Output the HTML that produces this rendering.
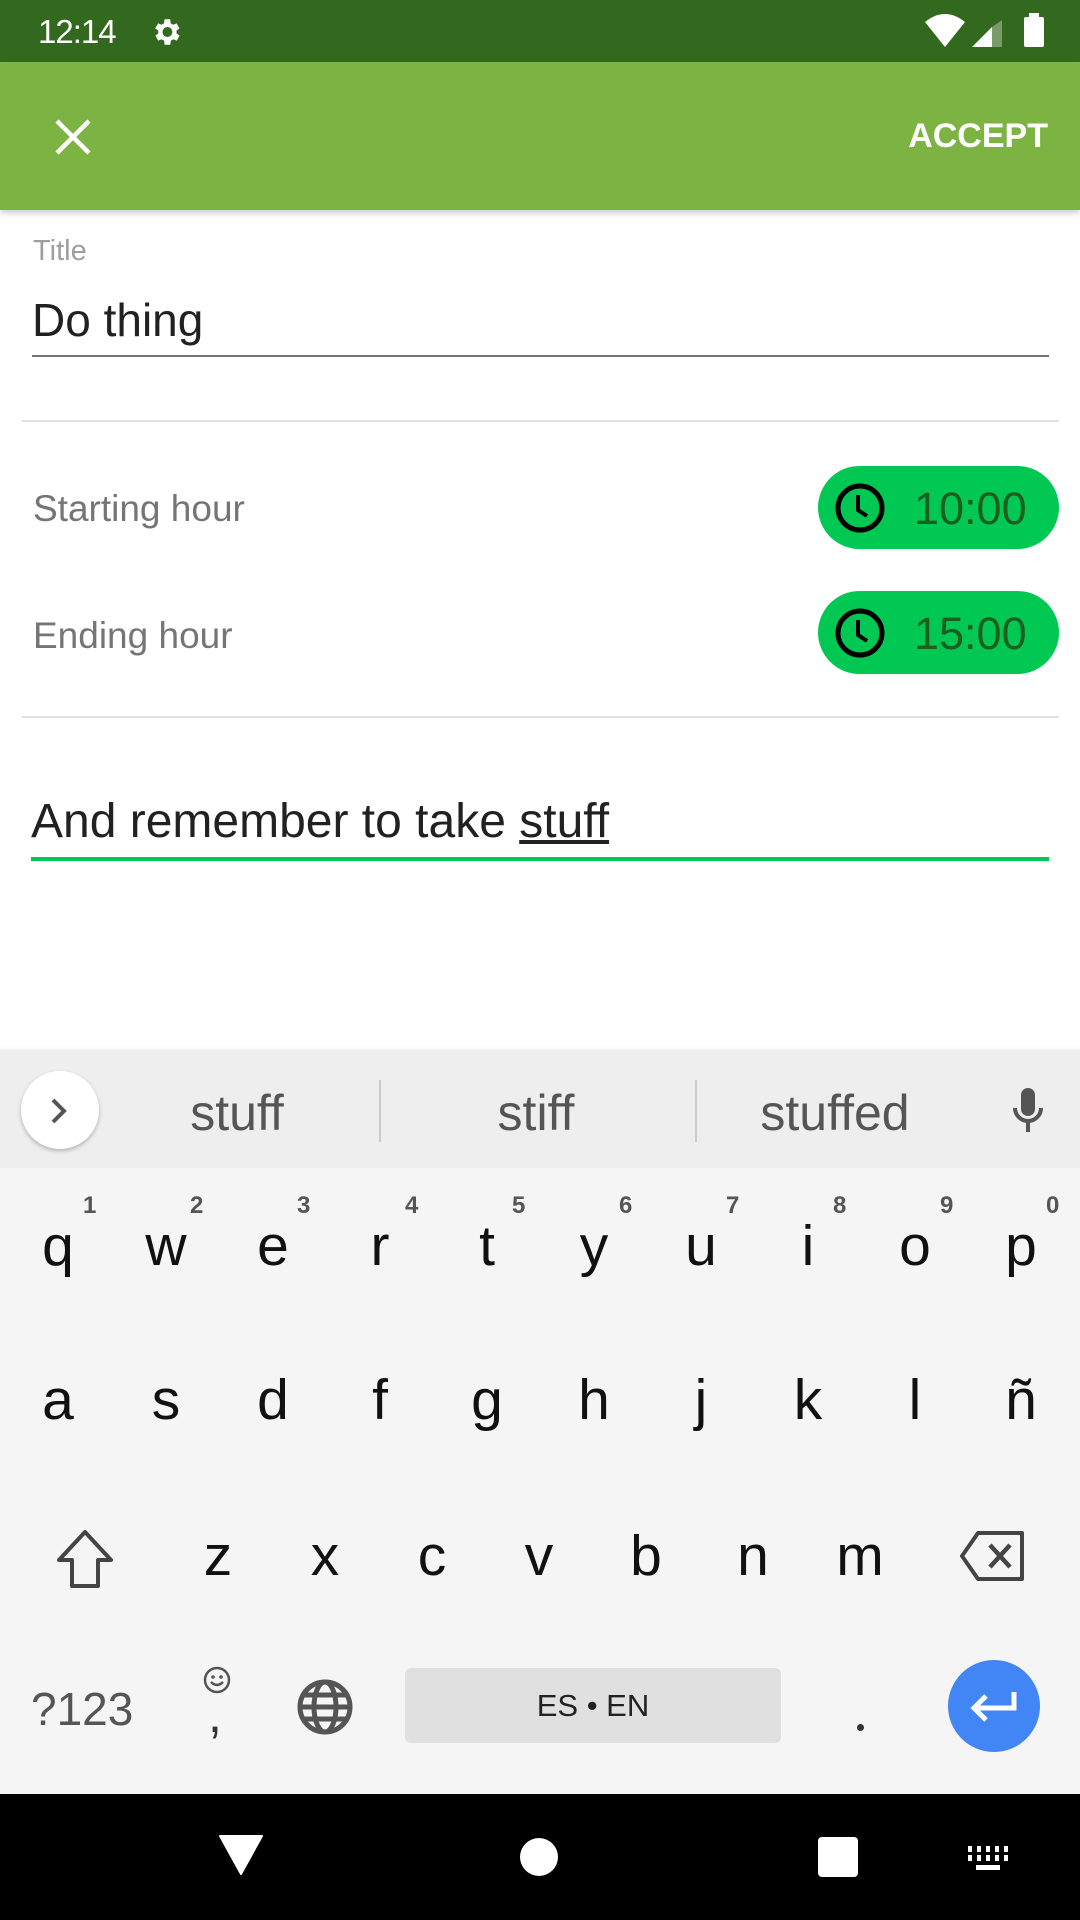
<!DOCTYPE html>
<html><head><meta charset="utf-8"><style>
*{margin:0;padding:0;box-sizing:border-box}
body{width:1080px;height:1920px;position:relative;overflow:hidden;background:#fff;font-family:"Liberation Sans",sans-serif}
.a{position:absolute}
.t{position:absolute;white-space:nowrap;line-height:1}
.k{position:absolute;width:108px;text-align:center;font-size:57px;color:#111;line-height:1}
.n{position:absolute;font-size:24px;color:#555;line-height:1;font-weight:bold}
</style></head><body>
<div class="a" style="left:0;top:0;width:1080px;height:62px;background:#33691e"></div>
<div class="t" style="left:38px;top:15px;font-size:33px;color:#fff;font-weight:500;letter-spacing:-1px">12:14</div>
<svg class="a" style="left:149px;top:15px" width="34" height="34" viewBox="0 0 24 24"><path fill="#fff" d="M19.4 13a7.5 7.5 0 000-2l2.1-1.6-2-3.5-2.5 1a7 7 0 00-1.7-1L15 3h-4l-.4 2.9a7 7 0 00-1.7 1l-2.5-1-2 3.5L6.6 11a7.5 7.5 0 000 2l-2.1 1.6 2 3.5 2.5-1a7 7 0 001.7 1L11 21h4l.4-2.9a7 7 0 001.7-1l2.5 1 2-3.5zM13 15.5A3.5 3.5 0 1113 8.5a3.5 3.5 0 010 7z"/></svg>
<svg class="a" style="left:925px;top:12px" width="40" height="36" viewBox="0 0 40 36"><path fill="#fff" d="M0 10Q20-6 40 10L20 35Z"/></svg>
<svg class="a" style="left:972px;top:20px" width="32" height="28" viewBox="0 0 32 28"><path fill="#fff" d="M0 27L20 7V27Z"/><path fill="#7a9a6a" d="M20 7L30 0V27H20Z"/></svg>
<div class="a" style="left:1024px;top:17px;width:20px;height:30px;background:#fff;border-radius:2px"></div>
<div class="a" style="left:1029px;top:13px;width:10px;height:5px;background:#fff"></div>
<div class="a" style="left:0;top:62px;width:1080px;height:148px;background:#7cb342;box-shadow:0 3px 6px rgba(0,0,0,.2)"></div>
<svg class="a" style="left:54px;top:118px" width="38" height="38" viewBox="0 0 38 38"><path stroke="#fff" stroke-width="4.5" d="M3 3L35 35M35 3L3 35"/></svg>
<div class="t" style="right:32px;top:119px;font-size:34px;color:#fff;font-weight:bold">ACCEPT</div>
<div class="t" style="left:33px;top:237px;font-size:29px;color:#9e9e9e">Title</div>
<div class="t" style="left:32px;top:297px;font-size:46px;color:#212121">Do thing</div>
<div class="a" style="left:32px;top:355px;width:1017px;height:2px;background:#757575"></div>
<div class="a" style="left:22px;top:420px;width:1037px;height:2px;background:#e0e0e0"></div>
<div class="t" style="left:33px;top:490px;font-size:37px;color:#757575">Starting hour</div>
<div class="a" style="left:818px;top:466px;width:241px;height:83px;background:#00c853;border-radius:42px"></div>
<svg class="a" style="left:833px;top:481px" width="54" height="54" viewBox="0 0 54 54"><circle cx="27" cy="27" r="22" fill="none" stroke="#000" stroke-width="5"/><path d="M25 14V29L34 35" fill="none" stroke="#000" stroke-width="4"/></svg>
<div class="t" style="left:914px;top:486px;font-size:45px;color:#1b5e20">10:00</div>
<div class="t" style="left:33px;top:617px;font-size:37px;color:#757575">Ending hour</div>
<div class="a" style="left:818px;top:591px;width:241px;height:83px;background:#00c853;border-radius:42px"></div>
<svg class="a" style="left:833px;top:606px" width="54" height="54" viewBox="0 0 54 54"><circle cx="27" cy="27" r="22" fill="none" stroke="#000" stroke-width="5"/><path d="M25 14V29L34 35" fill="none" stroke="#000" stroke-width="4"/></svg>
<div class="t" style="left:914px;top:611px;font-size:45px;color:#1b5e20">15:00</div>
<div class="a" style="left:22px;top:716px;width:1037px;height:2px;background:#e0e0e0"></div>
<div class="t" style="left:31px;top:798px;font-size:48px;color:#212121">And remember to take <span style="text-decoration:underline">stuff</span></div>
<div class="a" style="left:31px;top:857px;width:1018px;height:4px;background:#00c853"></div>
<div class="a" style="left:0;top:1046px;width:1080px;height:6px;background:linear-gradient(#fff,#eee)"></div>
<div class="a" style="left:0;top:1050px;width:1080px;height:118px;background:#eeeeee"></div>
<div class="a" style="left:21px;top:1071px;width:78px;height:78px;border-radius:50%;background:#fff;box-shadow:0 2px 4px rgba(0,0,0,.25)"></div>
<svg class="a" style="left:48px;top:1096px" width="22" height="30" viewBox="0 0 22 30"><path d="M5 4L16 15L5 26" fill="none" stroke="#555" stroke-width="4"/></svg>
<div class="t" style="left:137px;top:1088px;width:200px;text-align:center;font-size:50px;color:#555">stuff</div>
<div class="a" style="left:379px;top:1080px;width:2px;height:62px;background:#ccc"></div>
<div class="t" style="left:436px;top:1088px;width:200px;text-align:center;font-size:50px;color:#555">stiff</div>
<div class="a" style="left:695px;top:1080px;width:2px;height:62px;background:#ccc"></div>
<div class="t" style="left:735px;top:1088px;width:200px;text-align:center;font-size:50px;color:#555">stuffed</div>
<svg class="a" style="left:1008px;top:1086px" width="40" height="50" viewBox="0 0 40 50"><rect x="13" y="2" width="14" height="28" rx="7" fill="#555"/><path d="M7 22a13 13 0 0026 0M20 35V46" fill="none" stroke="#555" stroke-width="4"/></svg>
<div class="a" style="left:0;top:1168px;width:1080px;height:626px;background:#f5f5f5"></div>
<div class="k" style="left:4px;top:1218px">q</div><div class="n" style="left:83px;top:1194px">1</div>
<div class="k" style="left:112px;top:1218px">w</div><div class="n" style="left:190px;top:1194px">2</div>
<div class="k" style="left:219px;top:1218px">e</div><div class="n" style="left:297px;top:1194px">3</div>
<div class="k" style="left:326px;top:1218px">r</div><div class="n" style="left:405px;top:1194px">4</div>
<div class="k" style="left:433px;top:1218px">t</div><div class="n" style="left:512px;top:1194px">5</div>
<div class="k" style="left:540px;top:1218px">y</div><div class="n" style="left:619px;top:1194px">6</div>
<div class="k" style="left:647px;top:1218px">u</div><div class="n" style="left:726px;top:1194px">7</div>
<div class="k" style="left:754px;top:1218px">i</div><div class="n" style="left:833px;top:1194px">8</div>
<div class="k" style="left:861px;top:1218px">o</div><div class="n" style="left:940px;top:1194px">9</div>
<div class="k" style="left:967px;top:1218px">p</div><div class="n" style="left:1046px;top:1194px">0</div>
<div class="k" style="left:4px;top:1372px">a</div>
<div class="k" style="left:112px;top:1372px">s</div>
<div class="k" style="left:219px;top:1372px">d</div>
<div class="k" style="left:326px;top:1372px">f</div>
<div class="k" style="left:433px;top:1372px">g</div>
<div class="k" style="left:540px;top:1372px">h</div>
<div class="k" style="left:647px;top:1372px">j</div>
<div class="k" style="left:754px;top:1372px">k</div>
<div class="k" style="left:861px;top:1372px">l</div>
<div class="k" style="left:967px;top:1372px">ñ</div>
<svg class="a" style="left:54px;top:1528px" width="62" height="62" viewBox="0 0 62 62"><path d="M31 4L57 32H44V58H18V32H5Z" fill="none" stroke="#444" stroke-width="4" stroke-linejoin="round"/></svg>
<div class="k" style="left:164px;top:1528px">z</div>
<div class="k" style="left:271px;top:1528px">x</div>
<div class="k" style="left:378px;top:1528px">c</div>
<div class="k" style="left:485px;top:1528px">v</div>
<div class="k" style="left:592px;top:1528px">b</div>
<div class="k" style="left:699px;top:1528px">n</div>
<div class="k" style="left:806px;top:1528px">m</div>
<svg class="a" style="left:958px;top:1530px" width="70" height="52" viewBox="0 0 70 52"><path d="M20 3H64V49H20L4 26Z" fill="none" stroke="#444" stroke-width="4" stroke-linejoin="round"/><path d="M32 15L52 37M52 15L32 37" stroke="#444" stroke-width="4.5"/></svg>
<div class="t" style="left:31px;top:1686px;font-size:46px;color:#555">?123</div>
<svg class="a" style="left:202px;top:1665px" width="30" height="30" viewBox="0 0 30 30"><circle cx="15" cy="15" r="12" fill="none" stroke="#555" stroke-width="2.5"/><circle cx="11" cy="12" r="1.8" fill="#555"/><circle cx="19" cy="12" r="1.8" fill="#555"/><path d="M9 17Q15 23 21 17" fill="none" stroke="#555" stroke-width="2.5"/></svg>
<div class="t" style="left:208px;top:1690px;font-size:50px;color:#333">,</div>
<svg class="a" style="left:296px;top:1678px" width="58" height="58" viewBox="0 0 58 58"><g fill="none" stroke="#555" stroke-width="5"><circle cx="29" cy="29" r="25"/><ellipse cx="29" cy="29" rx="11" ry="25"/><path d="M4 29H54M8 17H50M8 41H50"/></g></svg>
<div class="a" style="left:405px;top:1668px;width:376px;height:75px;background:#e0e0e0;border-radius:6px"></div>
<div class="t" style="left:405px;top:1690px;width:376px;text-align:center;font-size:31px;color:#222">ES • EN</div>
<div class="a" style="left:857px;top:1724px;width:7px;height:7px;border-radius:50%;background:#333"></div>
<div class="a" style="left:948px;top:1660px;width:92px;height:92px;border-radius:50%;background:#4285f4"></div>
<svg class="a" style="left:966px;top:1686px" width="56" height="40" viewBox="0 0 56 40"><path d="M48 6V22H9M20 10L8 22L20 34" fill="none" stroke="#fff" stroke-width="5"/></svg>
<div class="a" style="left:0;top:1794px;width:1080px;height:126px;background:#000"></div>
<svg class="a" style="left:219px;top:1835px" width="44" height="40" viewBox="0 0 44 40"><path d="M1 1H43L22 39Z" fill="#fff" stroke="#fff" stroke-width="2" stroke-linejoin="round"/></svg>
<div class="a" style="left:520px;top:1838px;width:38px;height:38px;border-radius:50%;background:#fff"></div>
<div class="a" style="left:818px;top:1837px;width:40px;height:40px;border-radius:4px;background:#fff"></div>
<svg class="a" style="left:968px;top:1846px" width="42" height="26" viewBox="0 0 42 26"><g fill="#fff"><rect x="0" y="0" width="4" height="6"/><rect x="9" y="0" width="4" height="6"/><rect x="18" y="0" width="4" height="6"/><rect x="27" y="0" width="4" height="6"/><rect x="36" y="0" width="4" height="6"/><rect x="0" y="9" width="4" height="6"/><rect x="9" y="9" width="4" height="6"/><rect x="18" y="9" width="4" height="6"/><rect x="27" y="9" width="4" height="6"/><rect x="36" y="9" width="4" height="6"/><rect x="8" y="19" width="24" height="5"/></g></svg>
</body></html>
